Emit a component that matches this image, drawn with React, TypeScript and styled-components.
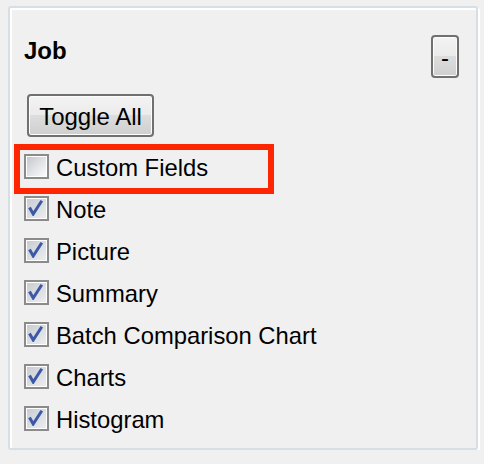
import styled, { createGlobalStyle } from 'styled-components'

const BG = '#f0f0f0'
const FRAME = '#d5dfe5'
const FONT = '"Liberation Sans", Arial, sans-serif'

const GlobalStyle = createGlobalStyle`
  html, body {
    margin: 0;
    padding: 0;
    background: ${BG};
  }
  body {
    font-family: ${FONT};
    color: #000;
  }
`

const Panel = styled.section`
  box-sizing: border-box;
  width: 470px;
  height: 444px;
  margin: 6px 0 0 8px;
  padding: 27px 17px 0 14px;
  border: 2px solid ${FRAME};
  border-radius: 3px;
  box-shadow: inset 2px 2px 0 #fff, 2px 2px 0 #fff;
`

const Header = styled.div`
  display: flex;
  justify-content: space-between;
  align-items: flex-start;
`

const Title = styled.h2`
  margin: 2px 0 0;
  font-size: 24px;
  line-height: 28px;
  font-weight: 700;
`

const Button = styled.button<{ $w: number }>`
  box-sizing: border-box;
  width: ${p => p.$w}px;
  height: 43px;
  padding: 3px 0 0;
  border: 2px solid #707070;
  border-radius: 4px;
  background: linear-gradient(#f3f3f3 0%, #ebebeb 48%, #dddddd 50%, #cfcfcf 100%);
  box-shadow: inset 0 0 0 1px #fcfcfc;
  font-family: ${FONT};
  font-size: 24px;
  color: #000;
  display: flex;
  align-items: center;
  justify-content: center;
`

const ToggleButton = styled(Button)`
  margin: 16px 0 8px 3px;
`

const List = styled.div`
  display: flex;
  flex-direction: column;
`

const Row = styled.label`
  position: relative;
  height: 42px;
  display: flex;
  align-items: center;
  gap: 7px;
  font-size: 23.8px;
`

const Label = styled.span`
  padding-top: 3px;
`

const Box = styled.span`
  box-sizing: border-box;
  width: 25px;
  height: 25px;
  border: 2px solid #8b8b8b;
  padding: 1px;
  background: #fff;
  display: flex;
  flex-shrink: 0;
`

const BoxFill = styled.span<{ $checked: boolean }>`
  flex: 1;
  display: flex;
  background: ${p => p.$checked
    ? 'linear-gradient(135deg, #c9cdd3 0%, #dde0e4 60%, #eceef0 100%)'
    : 'linear-gradient(135deg, #c4c7cc 0%, #e4e5e7 55%, #fbfbfb 100%)'};
`

const Highlight = styled.span`
  position: absolute;
  left: -10px;
  top: -1px;
  width: 260px;
  height: 50px;
  box-sizing: border-box;
  border: 6.5px solid #fe2600;
  pointer-events: none;
`

const items = [
  { label: 'Custom Fields', checked: false, marked: true },
  { label: 'Note', checked: true },
  { label: 'Picture', checked: true },
  { label: 'Summary', checked: true },
  { label: 'Batch Comparison Chart', checked: true },
  { label: 'Charts', checked: true },
  { label: 'Histogram', checked: true },
]

function Check({ checked }: { checked: boolean }) {
  return (
    <Box>
      <BoxFill $checked={checked}>
        {checked && (
          <svg width="17" height="17" viewBox="0 0 17 17">
            <path d="M2.5 8.5 L6.2 15 L14.8 1.8" fill="none" stroke="#3d58a6" strokeWidth="3" strokeLinejoin="miter" />
          </svg>
        )}
      </BoxFill>
    </Box>
  )
}

export default function App() {
  return (
    <>
      <GlobalStyle />
      <Panel>
        <Header>
          <Title>Job</Title>
          <Button $w={28}>-</Button>
        </Header>
        <ToggleButton $w={127}>Toggle All</ToggleButton>
        <List>
          {items.map((it, i) => (
            <Row key={i}>
              <Check checked={it.checked} />
              <Label>{it.label}</Label>
              {it.marked && <Highlight />}
            </Row>
          ))}
        </List>
      </Panel>
    </>
  )
}
